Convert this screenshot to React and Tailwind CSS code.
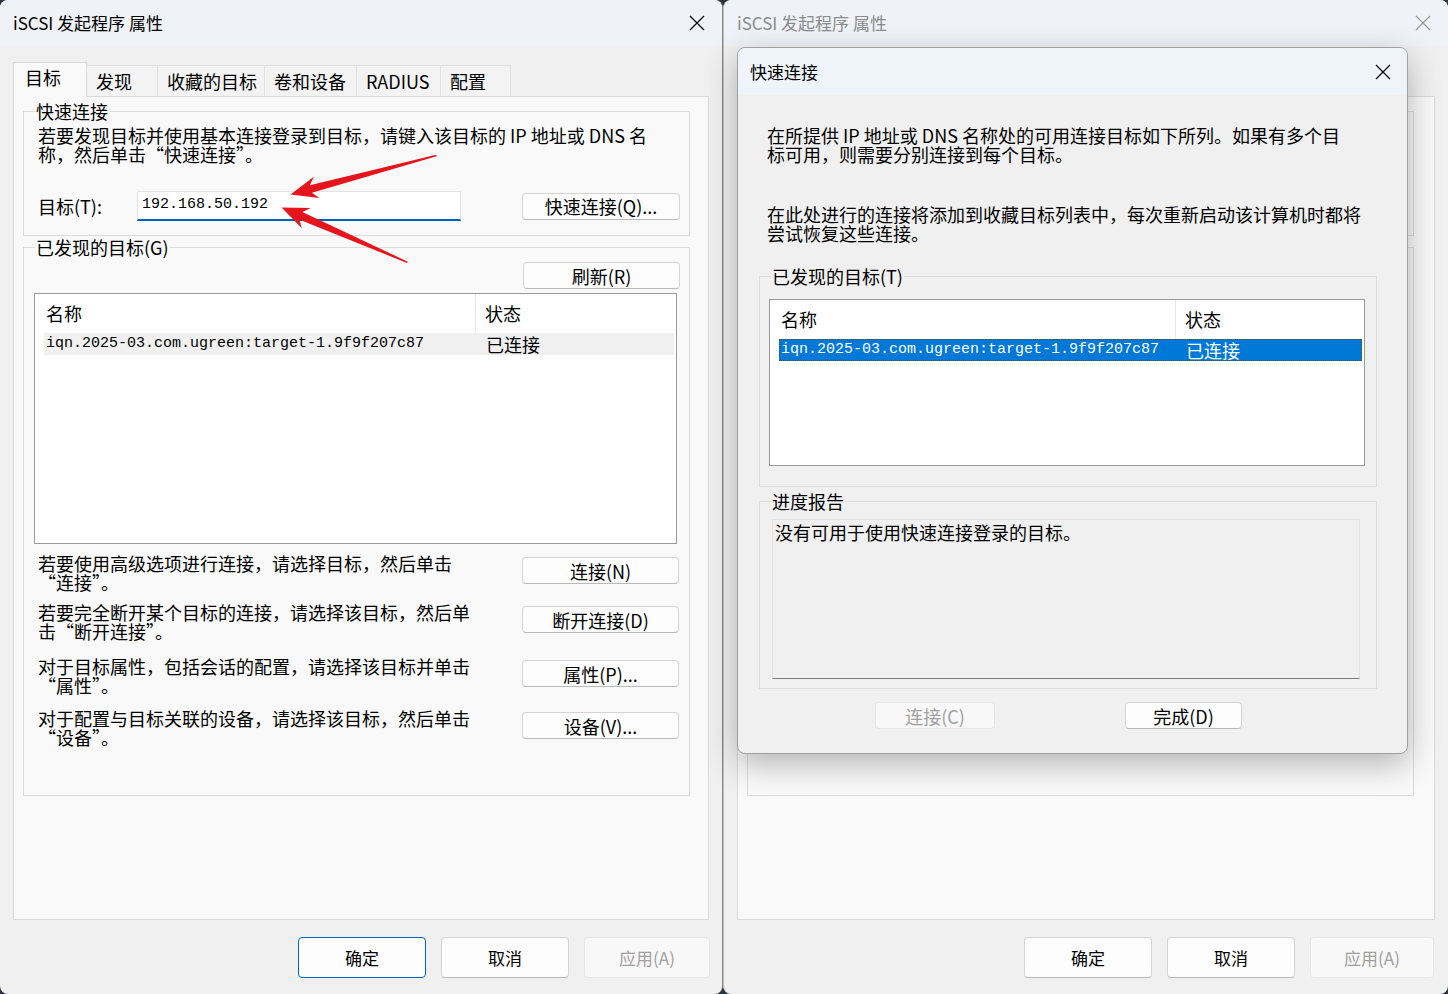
import React from 'react';

const CJK = "font-['Noto_Sans_CJK_SC','Noto_Sans',sans-serif]";
const MONO = "font-['Liberation_Mono','DejaVu_Sans_Mono',monospace]";
const IQN = 'iqn.2025-03.com.ugreen:target-1.9f9f207c87';

const TABS = [
    { label: '发现', w: 'w-[71px]' },
    { label: '收藏的目标', w: 'w-[107px]' },
    { label: '卷和设备', w: 'w-[92px]' },
    { label: 'RADIUS', w: 'w-[84px]' },
    { label: '配置', w: 'w-[70px]' },
];

const ACTIONS = [
    { text: ['若要使用高级选项进行连接，请选择目标，然后单击', '“连接”。'], btn: '连接(N)', mt: 'mt-[10px]' },
    { text: ['若要完全断开某个目标的连接，请选择该目标，然后单', '击“断开连接”。'], btn: '断开连接(D)', mt: 'mt-[11px]' },
    { text: ['对于目标属性，包括会话的配置，请选择该目标并单击', '“属性”。'], btn: '属性(P)...', mt: 'mt-[16px]' },
    { text: ['对于配置与目标关联的设备，请选择该目标，然后单击', '“设备”。'], btn: '设备(V)...', mt: 'mt-[14px]' },
];

export default function App() {
    return (
        <div className={`flex h-[994px] w-[1448px] overflow-hidden bg-[#2b3442] text-black ${CJK}`}>
            {/* left dialog, active */}
            <div className="relative flex h-[994px] w-[723px] shrink-0 flex-col rounded-[8px] border-r border-[#8a8a8a] bg-[#f0f0f0]">
                <TitleBar title="iSCSI 发起程序 属性" />
                <div className="mt-[16px] flex h-[34px] items-end pl-[13px]">
                    <div className="relative z-10 -mb-px flex h-[35px] w-[74px] items-start border border-b-0 border-[#dadada] bg-[#f9f9f9] pl-[11px] pt-[3px] text-[18px] leading-[22px]">
                        目标
                    </div>
                    {TABS.map((t) => (
                        <div
                            key={t.label}
                            className={`flex h-[31px] ${t.w} items-center border-t border-r border-[#e2e2e2] bg-[#f3f3f3] pl-[9px] text-[18px]`}
                        >
                            {t.label}
                        </div>
                    ))}
                </div>
                <div className="mx-[13px] h-[824px] border border-[#dadada] bg-[#f9f9f9] pl-[9px] pt-[3px]">
                    <Group label="快速连接" className="h-[136px] w-[667px]">
                        <div className="whitespace-nowrap pl-[14px] pt-[4px] text-[18px] leading-[19px]">
                            <div>若要发现目标并使用基本连接登录到目标，请键入该目标的 IP 地址或 DNS 名</div>
                            <div>称，然后单击“快速连接”。</div>
                        </div>
                        <div className="mt-[27px] flex items-center pl-[14px] pr-[9px]">
                            <span className="w-[99px] text-[18px]">目标(T):</span>
                            <div className={`flex h-[30px] w-[324px] items-center border border-b-2 border-[#e3e3e3] border-b-[#005fb8] bg-white pl-[4px] text-[15px] ${MONO}`}>
                                192.168.50.192
                            </div>
                            <Btn className="ml-auto h-[27px] w-[158px] text-[18px]">快速连接(Q)...</Btn>
                        </div>
                    </Group>

                    <Group label="已发现的目标(G)" className="h-[560px] w-[667px]">
                        <div className="mt-[4px] flex justify-end pr-[9px]">
                            <Btn className="h-[27px] w-[157px] text-[18px]">刷新(R)</Btn>
                        </div>
                        <ListBox className="ml-[10px] mt-[4px] h-[251px] w-[643px]" nameW="w-[441px]" rowNameW="w-[442px]" />
                        {ACTIONS.map((a) => (
                            <div key={a.btn} className={`${a.mt} flex items-start justify-between pl-[14px] pr-[10px]`}>
                                <div className="whitespace-nowrap text-[18px] leading-[19px]">
                                    <div>{a.text[0]}</div>
                                    <div>{a.text[1]}</div>
                                </div>
                                <Btn className="mt-[3px] h-[27px] w-[157px] text-[18px]">{a.btn}</Btn>
                            </div>
                        ))}
                    </Group>
                </div>
                <div className="mt-[17px] flex justify-end gap-[15px] pr-[12px]">
                    <Btn primary className="h-[41px] w-[128px] text-[17px]">确定</Btn>
                    <Btn className="h-[41px] w-[128px] text-[17px]">取消</Btn>
                    <Btn disabled className="h-[41px] w-[126px] text-[17px]">应用(A)</Btn>
                </div>

                <svg className="pointer-events-none absolute inset-0 h-full w-full" viewBox="0 0 723 994">
                    <polygon points={arrowPoints([437, 155], [291, 194])} fill="#e8141c" />
                    <polygon points={arrowPoints([408, 262], [282, 207])} fill="#e8141c" />
                </svg>
            </div>

            {/* right dialog, inactive, with quick connect modal */}
            <div className="relative flex h-[994px] flex-1 flex-col rounded-[8px] border-l border-[#bdbdbd] bg-[#f0f0f0]">
                <TitleBar title="iSCSI 发起程序 属性" inactive />
                <div className="mt-[16px] h-[34px]" />
                <div className="mx-[13px] h-[824px] border border-[#dadada] bg-[#f9f9f9] pl-[9px] pt-[3px]">
                    <div className="mt-[11px] h-[125px] w-[667px] border border-[#dcdcdc]" />
                    <div className="mt-[11px] h-[549px] w-[667px] border border-[#dcdcdc]" />
                </div>
                <div className="mt-[17px] flex justify-end gap-[15px] pr-[14px]">
                    <Btn className="h-[41px] w-[128px] text-[17px]">确定</Btn>
                    <Btn className="h-[41px] w-[128px] text-[17px]">取消</Btn>
                    <Btn disabled className="h-[41px] w-[124px] text-[17px]">应用(A)</Btn>
                </div>

                <QuickConnect />
            </div>
        </div>
    );
}

function QuickConnect() {
    return (
        <div className="absolute left-[13px] top-[47px] flex h-[707px] w-[671px] flex-col overflow-hidden rounded-[8px] border border-[#a0a0a0] bg-[#f0f0f0] shadow-[0_10px_32px_rgba(0,0,0,0.28)]">
            <div className="flex h-[47px] shrink-0 items-center justify-between bg-[#eef4fa] pl-[12px] pr-[16px]">
                <span className="text-[17px]">快速连接</span>
                <CloseIcon className="h-[16px] w-[16px] text-black" />
            </div>
            <div className="whitespace-nowrap pl-[29px] pt-[31px] text-[18px] leading-[19px]">
                <div>在所提供 IP 地址或 DNS 名称处的可用连接目标如下所列。如果有多个目</div>
                <div>标可用，则需要分别连接到每个目标。</div>
                <div className="mt-[41px]">在此处进行的连接将添加到收藏目标列表中，每次重新启动该计算机时都将</div>
                <div>尝试恢复这些连接。</div>
            </div>
            <Group label="已发现的目标(T)" className="ml-[21px] mt-[22px] h-[222px] w-[618px] shrink-0">
                <ListBox selected className="ml-[9px] mt-[12px] h-[167px] w-[596px]" nameW="w-[406px]" rowNameW="w-[407px]" />
            </Group>
            <Group label="进度报告" className="ml-[21px] mt-[3px] h-[199px] w-[618px] shrink-0">
                <div className="ml-[12px] mt-[7px] h-[160px] w-[588px] border border-[#e4e4e4] border-b-[#7d7d7d] bg-[#f0f0f0] pl-[2px] pt-[3px] text-[18px] leading-[19px]">
                    没有可用于使用快速连接登录的目标。
                </div>
            </Group>
            <div className="mt-[13px] flex pl-[137px]">
                <Btn disabled className="h-[27px] w-[120px] text-[18px]">连接(C)</Btn>
                <Btn className="ml-[130px] h-[27px] w-[117px] text-[18px]">完成(D)</Btn>
            </div>
        </div>
    );
}

function TitleBar({ title, inactive }) {
    return (
        <div className="flex h-[46px] shrink-0 items-center justify-between rounded-t-[8px] bg-[#eff2f6] pl-[13px] pr-[17px]">
            <span className={`text-[17px] ${inactive ? 'text-[#8c8c8c]' : 'text-black'}`}>{title}</span>
            <CloseIcon className={`h-[16px] w-[16px] ${inactive ? 'text-[#9a9a9a]' : 'text-black'}`} />
        </div>
    );
}

function Group({ label, className = '', children }) {
    return (
        <fieldset className={`border border-[#dcdcdc] ${className}`}>
            <legend className="ml-[11px] px-[1px] text-[18px] leading-[22px]">{label}</legend>
            {children}
        </fieldset>
    );
}

function ListBox({ className = '', nameW, rowNameW, selected }) {
    return (
        <div className={`border border-[#9a9a9a] bg-white ${className}`}>
            <div className="flex h-[39px] items-stretch text-[18px]">
                <div className={`${nameW} flex items-center border-r border-[#e8e8e8] pl-[11px]`}>名称</div>
                <div className="flex items-center pl-[9px]">状态</div>
            </div>
            <div
                className={`ml-[9px] mr-[2px] flex h-[22px] items-center ${
                    selected ? 'bg-[#0078d7] text-white outline-1 outline-dotted -outline-offset-1 outline-[#5a4a20]' : 'bg-[#f0f0f0]'
                }`}
            >
                <div className={`${rowNameW} pl-[2px] text-[15px] ${MONO}`}>{IQN}</div>
                <div className="text-[18px]">已连接</div>
            </div>
        </div>
    );
}

function Btn({ children, className = '', primary, disabled }) {
    const tone = disabled
        ? 'border-[#e6e6e6] bg-[#f8f8f8] text-[#a0a0a0]'
        : primary
          ? 'border-[#0067c0] bg-[#fdfdfd] text-black'
          : 'border-[#d4d4d4] border-b-[#b9b9b9] bg-[#fdfdfd] text-black';
    return (
        <button type="button" className={`flex shrink-0 items-center justify-center rounded-[4px] border leading-none ${tone} ${className}`}>
            {children}
        </button>
    );
}

function CloseIcon({ className }) {
    return (
        <svg viewBox="0 0 16 16" className={className} fill="none" stroke="currentColor" strokeWidth="1.2">
            <path d="M1 1L15 15M15 1L1 15" />
        </svg>
    );
}

// tapered annotation arrow from tail to tip
function arrowPoints([tx, ty], [hx, hy]) {
    const head = 27, headW = 11, neck = 21, shaftW = 4, tailW = 0.8;
    const dx = hx - tx, dy = hy - ty;
    const len = Math.hypot(dx, dy);
    const ux = dx / len, uy = dy / len;
    const nx = -uy, ny = ux;
    const p = (along, side) => `${(hx - ux * along + nx * side).toFixed(1)},${(hy - uy * along + ny * side).toFixed(1)}`;
    return [p(0, 0), p(head, headW), p(neck, shaftW), p(len, tailW), p(len, -tailW), p(neck, -shaftW), p(head, -headW)].join(' ');
}
